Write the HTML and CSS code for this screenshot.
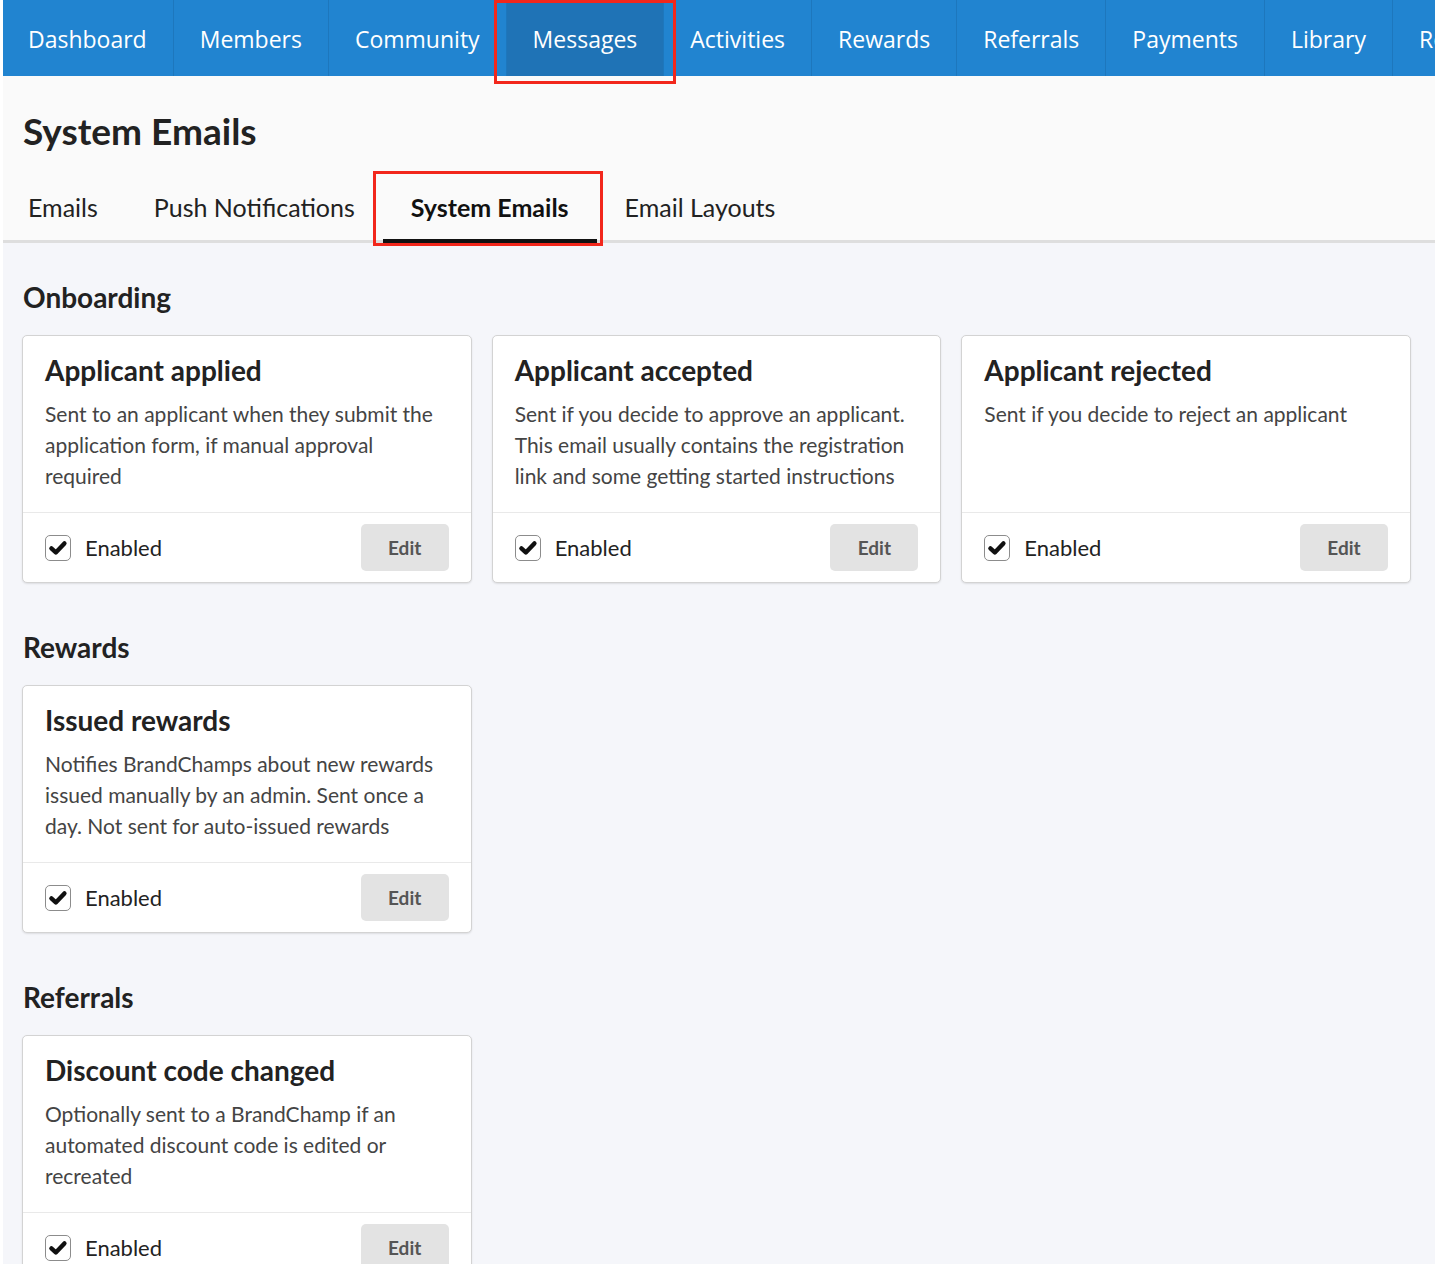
FILE: index.html
```html
<!DOCTYPE html>
<html>
<head>
<meta charset="utf-8">
<link rel="stylesheet" href="styles.css">
</head>
<body>
<div class="page">
  <nav class="topnav">
    <a class="nav-item first">Dashboard</a>
    <a class="nav-item">Members</a>
    <a class="nav-item">Community</a>
    <a class="nav-item active marked">Messages</a>
    <a class="nav-item">Activities</a>
    <a class="nav-item">Rewards</a>
    <a class="nav-item">Referrals</a>
    <a class="nav-item">Payments</a>
    <a class="nav-item">Library</a>
    <a class="nav-item last">Reports</a>
  </nav>
  <header class="page-header">
    <h1 class="page-title">System Emails</h1>
    <div class="tabs">
      <a class="tab first">Emails</a>
      <a class="tab">Push Notifications</a>
      <a class="tab active marked">System Emails</a>
      <a class="tab">Email Layouts</a>
    </div>
  </header>
  <main class="content">
    <section class="section">
      <h2 class="section-title">Onboarding</h2>
      <div class="grid">
        <div class="card">
          <div class="card-body">
            <h3 class="card-title">Applicant applied</h3>
            <p class="card-desc">Sent to an applicant when they submit the application form, if manual approval required</p>
          </div>
          <div class="card-footer">
            <label class="check"><span class="box"><svg viewBox="0 0 20 20" width="20" height="20"><path d="M3.4 10.4 L7.8 14.4 L16.4 5.4" fill="none" stroke="#111" stroke-width="4.4" stroke-linecap="round" stroke-linejoin="round"/></svg></span>Enabled</label>
            <button class="edit-btn">Edit</button>
          </div>
        </div>
        <div class="card">
          <div class="card-body">
            <h3 class="card-title">Applicant accepted</h3>
            <p class="card-desc">Sent if you decide to approve an applicant. This email usually contains the registration link and some getting started instructions</p>
          </div>
          <div class="card-footer">
            <label class="check"><span class="box"><svg viewBox="0 0 20 20" width="20" height="20"><path d="M3.4 10.4 L7.8 14.4 L16.4 5.4" fill="none" stroke="#111" stroke-width="4.4" stroke-linecap="round" stroke-linejoin="round"/></svg></span>Enabled</label>
            <button class="edit-btn">Edit</button>
          </div>
        </div>
        <div class="card">
          <div class="card-body">
            <h3 class="card-title">Applicant rejected</h3>
            <p class="card-desc">Sent if you decide to reject an applicant</p>
          </div>
          <div class="card-footer">
            <label class="check"><span class="box"><svg viewBox="0 0 20 20" width="20" height="20"><path d="M3.4 10.4 L7.8 14.4 L16.4 5.4" fill="none" stroke="#111" stroke-width="4.4" stroke-linecap="round" stroke-linejoin="round"/></svg></span>Enabled</label>
            <button class="edit-btn">Edit</button>
          </div>
        </div>
      </div>
    </section>
    <section class="section">
      <h2 class="section-title">Rewards</h2>
      <div class="grid">
        <div class="card">
          <div class="card-body">
            <h3 class="card-title">Issued rewards</h3>
            <p class="card-desc">Notifies BrandChamps about new rewards issued manually by an admin. Sent once a day. Not sent for auto-issued rewards</p>
          </div>
          <div class="card-footer">
            <label class="check"><span class="box"><svg viewBox="0 0 20 20" width="20" height="20"><path d="M3.4 10.4 L7.8 14.4 L16.4 5.4" fill="none" stroke="#111" stroke-width="4.4" stroke-linecap="round" stroke-linejoin="round"/></svg></span>Enabled</label>
            <button class="edit-btn">Edit</button>
          </div>
        </div>
      </div>
    </section>
    <section class="section">
      <h2 class="section-title">Referrals</h2>
      <div class="grid">
        <div class="card">
          <div class="card-body">
            <h3 class="card-title">Discount code changed</h3>
            <p class="card-desc">Optionally sent to a BrandChamp if an automated discount code is edited or recreated</p>
          </div>
          <div class="card-footer">
            <label class="check"><span class="box"><svg viewBox="0 0 20 20" width="20" height="20"><path d="M3.4 10.4 L7.8 14.4 L16.4 5.4" fill="none" stroke="#111" stroke-width="4.4" stroke-linecap="round" stroke-linejoin="round"/></svg></span>Enabled</label>
            <button class="edit-btn">Edit</button>
          </div>
        </div>
      </div>
    </section>
  </main>
</div>
</body>
</html>
```
FILE: styles.css
```css
* { box-sizing: border-box; }
html, body { margin: 0; padding: 0; background: #ffffff; }
body { font-family: "Lato", "Liberation Sans", sans-serif; color: #222; }
.page { width: 1432px; margin-left: 3px; min-height: 1264px; background: #f5f6fa; }

.topnav {
  display: flex;
  height: 76px;
  background: #2184d0;
  white-space: nowrap;
}
.nav-item {
  position: relative;
  flex: none;
  padding: 0 26px;
  line-height: 78px;
  font-family: "Open Sans", "Liberation Sans", sans-serif;
  font-size: 23px;
  color: #ffffff;
  border-right: 1px solid #1d77bd;
}
.nav-item.first { padding-left: 25px; }
.nav-item.last {
  flex: 1 1 auto;
  min-width: 0;
  overflow: hidden;
  border-right: none;
}
.nav-item.active { background: #1f73b6; }
.nav-item.marked::after {
  content: "";
  position: absolute;
  left: -13px;
  right: -13px;
  top: 0;
  bottom: -8px;
  border: 3px solid #f2271c;
  z-index: 5;
}

.page-header {
  background: #fafafa;
  padding: 33px 0 0 0;
}
.page-title {
  margin: 0 0 18px 20px;
  font-size: 37px;
  line-height: 44px;
  font-weight: 700;
  color: #222;
}
.tabs {
  display: flex;
  border-bottom: 3px solid #dedede;
}
.tab {
  position: relative;
  padding: 21px 28px 17px;
  line-height: 30px;
  font-size: 25px;
  color: #222;
  border-bottom: 4px solid transparent;
  margin-bottom: -3px;
}
.tab.first { padding-left: 25px; }
.tab.active { font-weight: 700; color: #111; border-bottom-color: #111; }
.tab.marked::after {
  content: "";
  position: absolute;
  left: -10px;
  right: -6px;
  top: 0;
  bottom: -7px;
  border: 3px solid #f2271c;
}

.content {
  padding: 37px 24px 0 19px;
}
.section { margin-bottom: 47px; }
.section-title {
  margin: 0 0 21px 1px;
  font-size: 28px;
  line-height: 34px;
  font-weight: 700;
  color: #222;
}
.grid {
  display: grid;
  grid-template-columns: repeat(3, 1fr);
  gap: 20px;
}
.card {
  display: flex;
  flex-direction: column;
  background: #ffffff;
  border: 1px solid #d3d3d3;
  border-radius: 5px;
  box-shadow: 0 1px 2px rgba(0, 0, 0, 0.10);
}
.card-body {
  flex: 1;
  padding: 16px 22px 21px;
}
.card-title {
  margin: 0 0 10px;
  font-size: 28px;
  line-height: 36px;
  font-weight: 700;
  color: #222;
}
.card-desc {
  margin: 0;
  font-size: 21px;
  line-height: 31px;
  color: #444;
  min-height: 93px;
}
.card-footer {
  display: flex;
  align-items: center;
  justify-content: space-between;
  border-top: 1px solid #e9e9e9;
  padding: 11px 22px;
}
.check {
  display: flex;
  align-items: center;
  gap: 14px;
  font-size: 22px;
  color: #222;
}
.box {
  display: flex;
  align-items: center;
  justify-content: center;
  width: 26px;
  height: 26px;
  border: 1.5px solid #8c8c8c;
  border-radius: 5px;
  background: #fff;
}
.edit-btn {
  width: 88px;
  height: 47px;
  border: none;
  border-radius: 5px;
  background: #e3e3e3;
  font-family: "Lato", "Liberation Sans", sans-serif;
  font-weight: 700;
  font-size: 19px;
  color: #555555;
}
```
